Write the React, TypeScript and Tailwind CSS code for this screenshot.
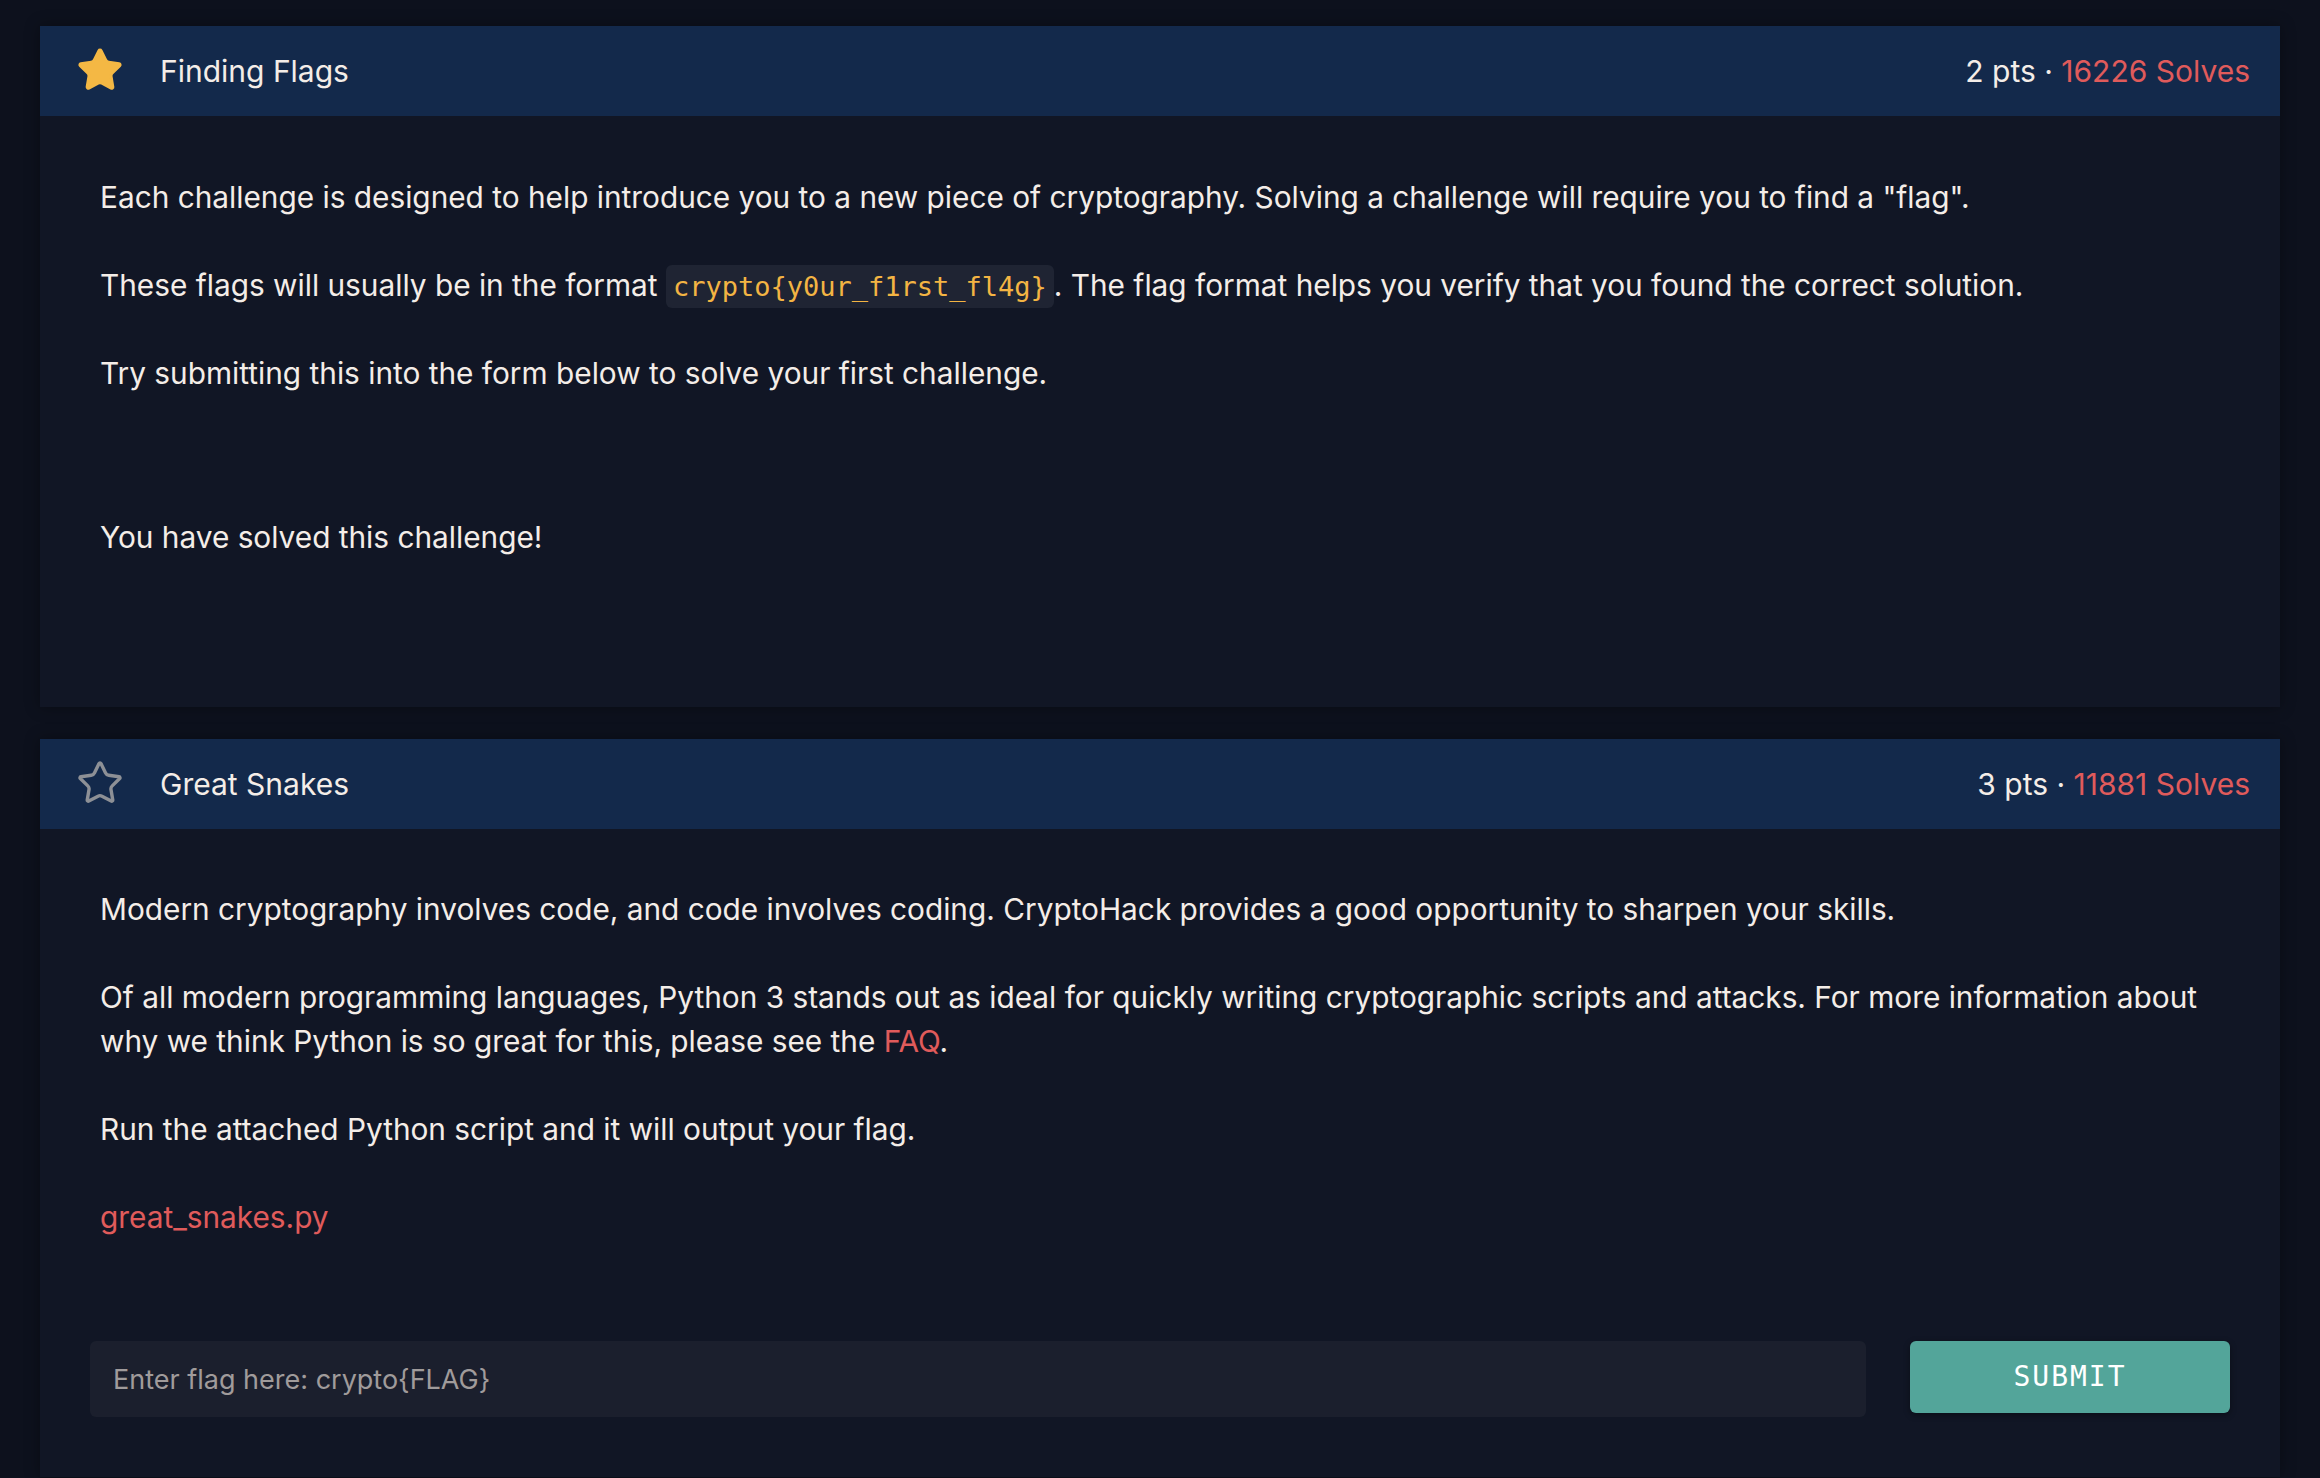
import React from "react";

const StarIcon = ({ filled }: { filled: boolean }) => (
  <svg
    width="48"
    height="48"
    viewBox="0 0 24 24"
    fill={filled ? "#f4b844" : "none"}
    stroke={filled ? "#f4b844" : "#8d9096"}
    strokeWidth={filled ? 1.6 : 1.7}
    strokeLinecap="round"
    strokeLinejoin="round"
  >
    <path d="M11.525 2.295a.53.53 0 0 1 .95 0l2.31 4.679a2.123 2.123 0 0 0 1.595 1.16l5.166.756a.53.53 0 0 1 .294.904l-3.736 3.638a2.123 2.123 0 0 0-.611 1.878l.882 5.14a.53.53 0 0 1-.771.56l-4.618-2.428a2.122 2.122 0 0 0-1.973 0L6.396 21.01a.53.53 0 0 1-.77-.56l.881-5.139a2.122 2.122 0 0 0-.611-1.879L2.16 9.795a.53.53 0 0 1 .294-.906l5.165-.755a2.122 2.122 0 0 0 1.597-1.16z" />
  </svg>
);

const Header = ({
  filled,
  title,
  pts,
  solves,
}: {
  filled: boolean;
  title: string;
  pts: string;
  solves: string;
}) => (
  <div className="flex h-[90px] items-center bg-[#13294b] pl-[36px] pr-[30px]">
    <div className="mt-[-2px] flex w-[84px] shrink-0">
      <StarIcon filled={filled} />
    </div>
    <div className="text-[30px] text-[#f4ede8]">{title}</div>
    <div className="ml-auto text-[30px] text-[#f4ede8]">
      {pts} · <span className="text-[#e05b5b]">{solves}</span>
    </div>
  </div>
);

export default function App() {
  return (
    <div
      className="min-h-[1478px] w-full bg-[#0d111d] px-[40px] pt-[26px] text-[#f4ede8]"
      style={{ fontFamily: "Inter, 'Noto Sans', sans-serif" }}
    >
      <div className="bg-[#111625] shadow-[0_0_14px_rgba(0,0,0,0.35)]">
        <Header filled title="Finding Flags" pts="2 pts" solves="16226 Solves" />
        <div className="px-[60px] pt-[59px] pb-[148px] text-[29.8px] leading-[44px]">
          <p className="mb-[44px]">
            Each challenge is designed to help introduce you to a new piece of cryptography. Solving a challenge will
            require you to find a "flag".
          </p>
          <p className="mb-[44px]">
            These flags will usually be in the format{" "}
            <code
              className="rounded-[6px] bg-[#1f2433] px-[7px] py-[6px] text-[27px] leading-none text-[#f3b443]"
              style={{ fontFamily: "'DejaVu Sans Mono', monospace" }}
            >
              crypto{"{"}y0ur_f1rst_fl4g{"}"}
            </code>
            . The flag format helps you verify that you found the correct solution.
          </p>
          <p>Try submitting this into the form below to solve your first challenge.</p>
          <p className="mt-[120px]">You have solved this challenge!</p>
        </div>
      </div>

      <div className="mt-[32px] bg-[#111625] shadow-[0_0_14px_rgba(0,0,0,0.35)]">
        <Header filled={false} title="Great Snakes" pts="3 pts" solves="11881 Solves" />
        <div className="px-[60px] pt-[58px] pb-[60px] text-[29.8px] leading-[44px]">
          <p className="mb-[44px]">
            Modern cryptography involves code, and code involves coding. CryptoHack provides a good opportunity to
            sharpen your skills.
          </p>
          <p className="mb-[44px]">
            Of all modern programming languages, Python 3 stands out as ideal for quickly writing cryptographic
            scripts and attacks. For more information about why we think Python is so great for this, please see
            the <a className="text-[#e05b5b]">FAQ</a>.
          </p>
          <p className="mb-[44px]">Run the attached Python script and it will output your flag.</p>
          <p>
            <a className="text-[#e05b5b]">great_snakes.py</a>
          </p>
        </div>
        <div className="flex items-start gap-[44px] px-[50px] pt-[42px] pb-[60px]">
          <div className="flex h-[76px] flex-1 items-center rounded-[6px] bg-[#1b1f2d] px-[23px] pt-[3px] text-[27px] text-[#a09b9b]">
            Enter flag here: crypto{"{"}FLAG{"}"}
          </div>
          <button
            className="h-[72px] w-[320px] rounded-[6px] bg-[#53a59a] text-[28px] tracking-[2px] text-white shadow-[0_2px_6px_rgba(0,0,0,0.4)]"
            style={{ fontFamily: "'DejaVu Sans Mono', monospace" }}
          >
            SUBMIT
          </button>
        </div>
      </div>
    </div>
  );
}
